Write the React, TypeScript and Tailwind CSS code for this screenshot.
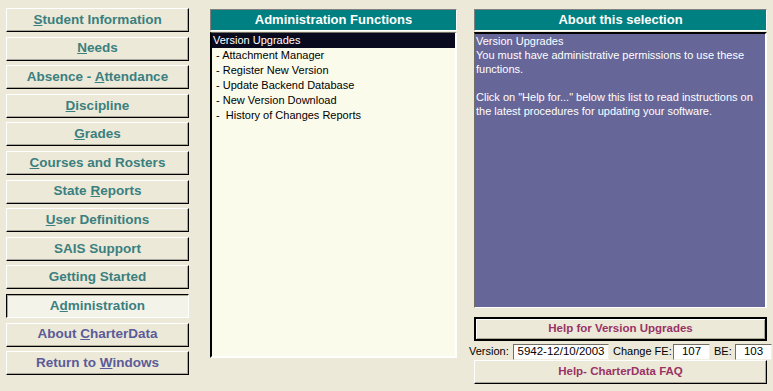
import React from "react";

type NavItem = { pre: string; key?: string; post?: string; color: string; active?: boolean };

const teal = "text-[#3b7f7f]";
const purple = "text-[#5b5b98]";

const navItems: NavItem[] = [
  { pre: "", key: "S", post: "tudent Information", color: teal },
  { pre: "", key: "N", post: "eeds", color: teal },
  { pre: "Absence - ", key: "A", post: "ttendance", color: teal },
  { pre: "", key: "D", post: "iscipline", color: teal },
  { pre: "", key: "G", post: "rades", color: teal },
  { pre: "", key: "C", post: "ourses and Rosters", color: teal },
  { pre: "State ", key: "R", post: "eports", color: teal },
  { pre: "", key: "U", post: "ser Definitions", color: teal },
  { pre: "SAIS Support", color: teal },
  { pre: "Getting Started", color: teal },
  { pre: "A", key: "d", post: "ministration", color: teal, active: true },
  { pre: "About ", key: "C", post: "harterData", color: purple },
  { pre: "Return to ", key: "W", post: "indows", color: purple },
];

const listItems = [
  "Version Upgrades",
  " - Attachment Manager",
  " - Register New Version",
  " - Update Backend Database",
  " - New Version Download",
  " -  History of Changes Reports",
];

const raised =
  "border border-t-white border-l-white border-b-black border-r-black shadow-[inset_-1px_-1px_0_#aca899] bg-[#ece9d8]";

function NavButton({ item }: { item: NavItem }) {
  const frame = item.active
    ? "border border-t-black border-l-black border-b-white border-r-white shadow-[inset_1px_1px_0_#aca899] bg-[#f4f3e9]"
    : raised;
  return (
    <div
      className={`h-[24px] flex items-center justify-center text-[13.5px] font-bold ${frame} ${item.color}`}
    >
      <span>
        {item.pre}
        {item.key && <span className="underline underline-offset-1">{item.key}</span>}
        {item.post}
      </span>
    </div>
  );
}

function Header({ title }: { title: string }) {
  return (
    <div className="h-[22px] flex items-center justify-center bg-[#008080] text-white text-[13px] font-bold border border-t-[#808080] border-l-[#808080] border-b-white border-r-white">
      {title}
    </div>
  );
}

function Field({ value, w }: { value: string; w: string }) {
  return (
    <div
      className={`h-[16px] shrink-0 ${w} bg-white border border-t-[#716f64] border-l-[#716f64] border-b-[#f1efe2] border-r-[#f1efe2] flex items-center justify-center text-[11.5px] leading-none text-black whitespace-nowrap`}
    >
      {value}
    </div>
  );
}

export default function App() {
  return (
    <div
      className="w-[773px] h-[391px] bg-[#ece9d8] flex overflow-hidden"
      style={{ fontFamily: '"Liberation Sans", Arial, sans-serif' }}
    >
      <div className="w-[183px] shrink-0 ml-[6px] pt-[8px] flex flex-col gap-[4.6px]">
        {navItems.map((it, i) => (
          <NavButton key={i} item={it} />
        ))}
      </div>

      <div className="w-[247px] shrink-0 ml-[21px] pt-[9px] flex flex-col">
        <Header title="Administration Functions" />
        <div className="h-[326px] mt-[1px] bg-[#fbfbec] border-l-2 border-l-black border-t border-t-[#716f64] border-r-2 border-r-white border-b-2 border-b-white">
          {listItems.map((t, i) => (
            <div
              key={i}
              className={`h-[15px] leading-[15px] text-[11px] pl-[1px] whitespace-pre ${
                i === 0 ? "bg-[#0a0a1e] text-white" : "text-black"
              }`}
            >
              {t}
            </div>
          ))}
        </div>
      </div>

      <div className="w-[304px] shrink-0 ml-[12px] pt-[9px] flex flex-col">
        <div className="ml-[5px] w-[293px]">
          <Header title="About this selection" />
        </div>
        <div className="ml-[5px] w-[293px] h-[276px] mt-[1px] bg-[#666699] border-t-2 border-t-black border-l border-l-[#716f64] border-r-2 border-r-white border-b border-b-white text-white text-[11px] leading-[14px] px-[1px] pt-0">
          <div>Version Upgrades</div>
          <div>You must have administrative permissions to use these functions.</div>
          <div className="h-[14px]" />
          <div>
            Click on "Help for..." below this list to read instructions on the latest
            procedures for updating your software.
          </div>
        </div>
        <div className="ml-[5px] w-[293px] h-[24px] mt-[9px] flex items-center justify-center text-[11.5px] font-bold text-[#993366] border-2 border-black bg-[#ece9d8] shadow-[inset_1px_1px_0_white,inset_-1px_-1px_0_#aca899]">
          Help for Version Upgrades
        </div>
        <div className="h-[17px] mt-[2px] flex items-center text-[11px] text-black whitespace-nowrap">
          <span className="w-[44px] shrink-0">Version:</span>
          <Field value="5942-12/10/2003" w="w-[96px]" />
          <span className="w-[64px] shrink-0 pl-[4px]">Change FE:</span>
          <Field value="107" w="w-[37px]" />
          <span className="w-[25px] shrink-0 pl-[4px]">BE:</span>
          <Field value="103" w="w-[37px]" />
        </div>
        <div
          className={`ml-[5px] w-[293px] h-[24px] mt-[0px] flex items-center justify-center text-[11.5px] font-bold text-[#993366] ${raised}`}
        >
          Help- CharterData FAQ
        </div>
      </div>
    </div>
  );
}
